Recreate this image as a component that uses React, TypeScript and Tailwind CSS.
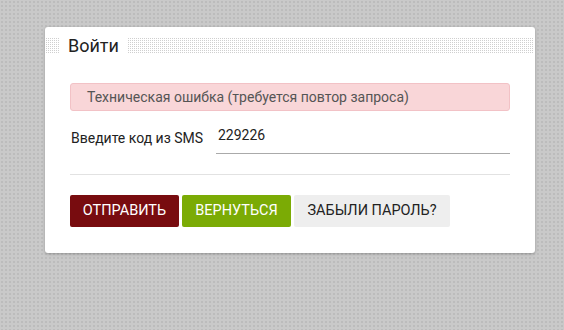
export default function App() {
  return (
    <div
      className="min-h-[330px] w-full bg-[#c9c9c9] bg-[image:radial-gradient(#bcbcbc_0.8px,transparent_0.8px)] bg-[size:4px_4px] pt-[27px]"
      style={{ fontFamily: 'Roboto, "Liberation Sans", sans-serif' }}
    >
      <div className="ml-[45px] w-[490px] h-[226px] bg-white rounded-[3px] shadow-[0_1px_3px_rgba(0,0,0,0.25)] pt-[11px]">
        {/* dotted header band */}
        <div className="mx-[1px] h-[16px] flex items-center bg-[image:linear-gradient(to_bottom,transparent_1px,#fff_1px),linear-gradient(to_right,#cfcfcf_1px,#fff_1px)] bg-[size:2px_2px]">
          <div className="ml-[14px] px-[8px] bg-white text-[18px] leading-[18px] text-[#222]">Войти</div>
        </div>

        <div className="px-[25px] pt-[29px]">
          <div className="h-[28px] flex items-center px-[16px] bg-[#f9d6d8] border border-[#f2c2c6] rounded-[3px] text-[14px] text-[#555]">
            Техническая ошибка (требуется повтор запроса)
          </div>

          <div className="flex items-center mt-[12px]">
            <label className="w-[146px] pl-[1px] text-[14px] text-[#222]">Введите код из SMS</label>
            <div className="flex-1 border-b border-[#aaa] pb-[7px] pt-[2px] pl-[2px] text-[14px] text-[#222]">229226</div>
          </div>

          <div className="mt-[20px] border-t border-[#e2e2e2]" />

          <div className="flex gap-[3px] mt-[20px]">
            <button className="h-[32px] w-[109px] rounded-[2px] bg-[#780c0f] text-white text-[14.5px] uppercase">Отправить</button>
            <button className="h-[32px] w-[109px] rounded-[2px] bg-[#7bab05] text-white text-[14.5px] uppercase">Вернуться</button>
            <button className="h-[32px] w-[156px] rounded-[2px] bg-[#eeeeee] text-[#222] text-[14.5px] uppercase">Забыли пароль?</button>
          </div>
        </div>
      </div>
    </div>
  );
}
